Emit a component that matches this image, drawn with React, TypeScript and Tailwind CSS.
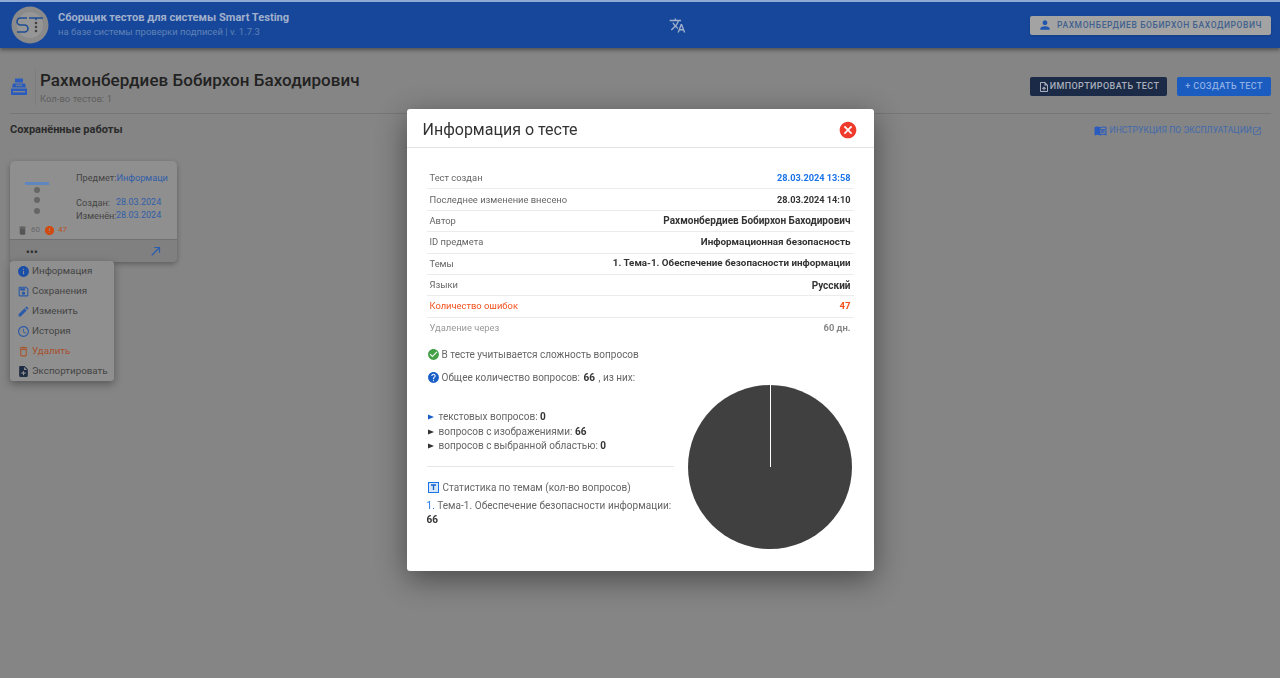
import { MdTranslate, MdPerson, MdInfo, MdOutlineSave, MdEdit, MdDeleteOutline, MdCheckCircle, MdHelp, MdCancel, MdCallMade, MdOpenInNew, MdOutlineMenuBook, MdUploadFile, MdNoteAdd, MdDelete, MdError, MdOutlineAccessTime } from "react-icons/md";

const rows = [
    { label: "Тест создан", value: "28.03.2024 13:58", labelCls: "text-[#666]", valueCls: "text-[9.2px] text-[#1a73e8] font-bold" },
    { label: "Последнее изменение внесено", value: "28.03.2024 14:10", labelCls: "text-[#666]", valueCls: "text-[9.2px] text-[#333] font-bold" },
    { label: "Автор", value: "Рахмонбердиев Бобирхон Баходирович", labelCls: "text-[#666]", valueCls: "text-[10px] text-[#333] font-bold" },
    { label: "ID предмета", value: "Информационная безопасность", labelCls: "text-[#666]", valueCls: "text-[9.9px] text-[#333] font-bold" },
    { label: "Темы", value: "1. Тема-1. Обеспечение безопасности информации", labelCls: "text-[#666]", valueCls: "text-[9.8px] text-[#333] font-bold" },
    { label: "Языки", value: "Русский", labelCls: "text-[#666]", valueCls: "text-[10px] text-[#333] font-bold" },
    { label: "Количество ошибок", value: "47", labelCls: "text-[#f4511e]", valueCls: "text-[9.6px] text-[#f4511e] font-bold" },
    { label: "Удаление через", value: "60 дн.", labelCls: "text-[#999]", valueCls: "text-[9.4px] text-[#888] font-bold" },
];

const menu = [
    { label: "Информация", Icon: MdInfo, iconCls: "text-[#1a4fa8]", textCls: "text-[#444]" },
    { label: "Сохранения", Icon: MdOutlineSave, iconCls: "text-[#2a5aa8]", textCls: "text-[#444]" },
    { label: "Изменить", Icon: MdEdit, iconCls: "text-[#2a5aa8]", textCls: "text-[#444]" },
    { label: "История", Icon: MdOutlineAccessTime, iconCls: "text-[#2a5aa8]", textCls: "text-[#444]" },
    { label: "Удалить", Icon: MdDeleteOutline, iconCls: "text-[#a8562e]", textCls: "text-[#a8502e]" },
    { label: "Экспортировать", Icon: MdNoteAdd, iconCls: "text-[#1e2c44]", textCls: "text-[#444]" },
];

function Logo() {
    return (
        <svg width="38" height="38" viewBox="0 0 38 38">
            <circle cx="19" cy="19" r="18.5" fill="#8a8a8a" />
            <circle cx="19" cy="19" r="13" fill="#969696" />
            <path d="M16 12H9.5a3 3 0 0 0 0 7h4a3 3 0 0 1 0 7H6" fill="none" stroke="#1f4e94" strokeWidth="1.6" />
            <path d="M18 12h14M25 12v2" fill="none" stroke="#1f4e94" strokeWidth="1.6" />
            <circle cx="25" cy="17" r="1.3" fill="#444" />
            <circle cx="25" cy="21" r="1.3" fill="#444" />
            <circle cx="25" cy="25" r="1.3" fill="#444" />
        </svg>
    );
}

function StackIcon() {
    return (
        <svg width="18" height="18" viewBox="0 0 18 18" fill="#2a5cc0">
            <path d="M5 0.5h8v4H5z" />
            <path d="M3 5.5h12l1 4H2z" />
            <rect x="6" y="6.7" width="6" height="1" fill="#858585" />
            <path d="M1 10.5h16v6.5H1z" />
            <rect x="3" y="13" width="12" height="1.4" fill="#858585" />
        </svg>
    );
}

function TopicIcon() {
    return (
        <svg width="11" height="11" viewBox="0 0 11 11" className="mr-[4px] ml-[1px]">
            <rect x="0.5" y="0.5" width="10" height="10" fill="#d8e8fb" stroke="#1a73e8" />
            <path d="M3 3h5M5.5 3v5" fill="none" stroke="#1a5fc8" strokeWidth="1.3" />
        </svg>
    );
}

function Bullet({ cls }: { cls: string }) {
    return (
        <svg width="6" height="6" viewBox="0 0 6 6" className={`inline-block mr-[5px] ml-[1px] ${cls}`} fill="currentColor">
            <path d="M0 0.5L6 3L0 5.5z" />
        </svg>
    );
}

export default function App() {
    return (
        <div className="relative min-h-[678px] bg-[#858585] font-['Roboto',sans-serif] overflow-hidden">
            {/* Header */}
            <div className="h-[48px] border-t-2 border-[#8fa9d4] bg-[#17479a] shadow-[0_2px_4px_rgba(0,0,0,0.4)] flex items-center pl-[11px] pr-[9px]">
                <Logo />
                <div className="ml-[9px] w-[611px]">
                    <p className="text-[11.1px] leading-[14px] font-bold text-[#a0b0cc]">Сборщик тестов для системы Smart Testing</p>
                    <p className="text-[9.5px] leading-[14px] text-[#5f82b8]">на базе системы проверки подписей | v. 1.7.3</p>
                </div>
                <MdTranslate className="text-[#a0b0cc] text-[17px]" />
                <div className="ml-auto h-[19px] w-[241px] rounded-[2px] bg-[#a3a3a3] shadow-sm flex items-center pl-[8px]">
                    <MdPerson className="text-[#1f56b0] text-[14px]" />
                    <span className="ml-[5px] text-[8.5px] font-medium tracking-[0.6px] text-[#41618f] whitespace-nowrap">РАХМОНБЕРДИЕВ БОБИРХОН БАХОДИРОВИЧ</span>
                </div>
            </div>

            {/* Page title */}
            <div className="pl-[10px] pr-[9px] pt-[20px]">
                <div className="flex items-center h-[37px]">
                    <StackIcon />
                    <div className="ml-[7px] border-l border-[#7c7c7c] pl-[4px] h-[36px]">
                        <h1 className="text-[17px] leading-[22px] font-medium tracking-[0.05px] text-[#222]">Рахмонбердиев Бобирхон Баходирович</h1>
                        <p className="text-[9.5px] leading-[12px] mt-[2px] text-[#5f5f5f]">Кол-во тестов: 1</p>
                    </div>
                    <div className="ml-auto flex items-center gap-[10px]">
                        <button className="h-[19px] w-[137px] rounded-[2px] bg-[#1a2a47] flex items-center justify-center text-[9px] font-medium tracking-[0.4px] text-[#a9afba] whitespace-nowrap">
                            <MdUploadFile className="text-[12px]" />
                            ИМПОРТИРОВАТЬ ТЕСТ
                        </button>
                        <button className="h-[19px] w-[94px] rounded-[2px] bg-[#1a5cc0] flex items-center justify-center text-[9px] font-medium tracking-[0.4px] text-[#8fb0e4] whitespace-nowrap">
                            + СОЗДАТЬ ТЕСТ
                        </button>
                    </div>
                </div>
                <div className="mt-[8px] border-t border-[#767676]" />
                <div className="flex items-center justify-between mt-[8px] h-[16px]">
                    <h2 className="text-[11px] leading-[14px] font-bold text-[#2a2a2a]">Сохранённые работы</h2>
                    <a className="flex items-center pr-[9px] text-[8.5px] tracking-[0.1px] text-[#3f69ad] mt-[1px]">
                        <MdOutlineMenuBook className="text-[13px] text-[#2a5cc0] mr-[3px]" />
                        ИНСТРУКЦИЯ ПО ЭКСПЛУАТАЦИИ
                        <MdOpenInNew className="text-[10px]" />
                    </a>
                </div>

                {/* Test card */}
                <div className="relative mt-[23px] w-[167px] h-[101px] rounded-[5px] bg-[#8f8f8f] shadow-[0_2px_5px_rgba(0,0,0,0.3)]">
                    <div className="h-[78px] relative">
                        <div className="absolute left-[15px] top-[21px] w-[24px] h-[3px] bg-[#5f86c0]" />
                        <div className="absolute left-[24px] top-[26px] w-[6px] h-[6px] rounded-full bg-[#666]" />
                        <div className="absolute left-[24px] top-[36px] w-[6px] h-[6px] rounded-full bg-[#666]" />
                        <div className="absolute left-[24px] top-[47px] w-[6px] h-[6px] rounded-full bg-[#666]" />
                        <div className="absolute left-[66px] top-[10px] text-[9.2px] leading-[13px] text-[#444] whitespace-nowrap">Предмет:<span className="text-[#2f5ea8]">Информаци</span></div>
                        <div className="absolute left-[66px] top-[35px] text-[9.2px] leading-[13px] text-[#444]">Создан:</div>
                        <div className="absolute left-[106px] top-[35px] text-[9px] leading-[13px] text-[#2f5ea8]">28.03.2024</div>
                        <div className="absolute left-[66px] top-[48px] text-[9.2px] leading-[13px] text-[#444]">Изменён:</div>
                        <div className="absolute left-[106px] top-[48px] text-[9px] leading-[13px] text-[#2f5ea8]">28.03.2024</div>
                        <div className="absolute left-[7px] top-[63px] flex items-center text-[8px] text-[#666]">
                            <MdDelete className="text-[11px] text-[#555]" />
                            <span className="ml-[3px]">60</span>
                            <MdError className="ml-[4px] text-[11px] text-[#d04a10]" />
                            <span className="ml-[3px] text-[#b9521c]">47</span>
                        </div>
                    </div>
                    <div className="h-[23px] rounded-b-[5px] border-t border-[#707070] bg-[#808080] flex items-center justify-between pl-[16px] pr-[14px]">
                        <span className="text-[10px] leading-none font-bold tracking-[0.4px] text-[#2a2a2a] pt-[3px]">•••</span>
                        <MdCallMade className="text-[#2a5cb0] text-[14px]" />
                    </div>

                    {/* Card menu */}
                    <div className="absolute left-0 top-[100px] w-[104px] h-[120px] rounded-[3px] bg-[#8f8f8f] shadow-[0_3px_8px_rgba(0,0,0,0.35)] z-10">
                        {menu.map(({ label, Icon, iconCls, textCls }) => (
                            <div key={label} className="h-[20px] flex items-center pl-[7px]">
                                <Icon className={`text-[13px] ${iconCls}`} />
                                <span className={`ml-[2px] text-[9.8px] ${textCls}`}>{label}</span>
                            </div>
                        ))}
                    </div>
                </div>
            </div>

            {/* Modal */}
            <div className="fixed inset-0 backdrop-blur-[0.7px] flex items-start justify-center pt-[109px] z-20">
                <div className="w-[467px] h-[462px] rounded-[3px] bg-white shadow-[0_8px_30px_rgba(0,0,0,0.45)]">
                    <div className="h-[39px] pt-[4px] border-b border-[#e3e3e3] flex items-center justify-between pl-[16px] pr-[16px]">
                        <h3 className="text-[16px] text-[#333]">Информация о тесте</h3>
                        <MdCancel className="text-[#ef3b2c] text-[20px]" />
                    </div>
                    <div className="px-[20px] pt-[20px]">
                        {rows.map((r, i) => (
                            <div key={r.label} className={`h-[21.4px] flex items-center justify-between px-[3px] ${i < rows.length - 1 ? "border-b border-[#ececec]" : ""}`}>
                                <span className={`text-[9.4px] ${r.labelCls}`}>{r.label}</span>
                                <span className={r.valueCls}>{r.value}</span>
                            </div>
                        ))}
                        <div className="flex">
                            <div className="w-[247px] shrink-0 text-[10px] text-[#666]">
                                <p className="flex items-center h-[16px] mt-[7px]"><MdCheckCircle className="text-[#43a047] text-[13px] mr-[2px]" />В тесте учитывается сложность вопросов</p>
                                <p className="flex items-center h-[16px] mt-[7px]"><MdHelp className="text-[#1a5fc8] text-[13px] mr-[2px]" />Общее количество вопросов:&nbsp;<b className="text-[#333] ml-[1px]">66</b>&nbsp;<span className="ml-[1px]">, из них:</span></p>
                                <div className="mt-[25px] leading-[14.5px]">
                                    <p><Bullet cls="text-[#1a5fc8]" />текстовых вопросов: <b className="text-[#333]">0</b></p>
                                    <p><Bullet cls="text-[#333]" />вопросов с изображениями: <b className="text-[#333]">66</b></p>
                                    <p><Bullet cls="text-[#333]" />вопросов с выбранной областью: <b className="text-[#333]">0</b></p>
                                </div>
                                <div className="mt-[12px] border-t border-[#e6e6e6]" />
                                <p className="flex items-center h-[16px] mt-[13px]"><TopicIcon />Статистика по темам (кол-во вопросов)</p>
                                <p className="mt-[1px] leading-[14.5px] pt-[2px] tracking-[0.05px]"><span className="text-[#1a73e8]">1.</span> Тема-1. Обеспечение безопасности информации:<br /><b className="text-[#333]">66</b></p>
                            </div>
                            <div className="ml-[14px] mt-[46px]">
                                <svg width="164" height="164" viewBox="0 0 164 164">
                                    <circle cx="82" cy="82" r="82" fill="#404040" />
                                    <line x1="82.5" y1="0" x2="82.5" y2="82" stroke="#fff" strokeWidth="1" />
                                </svg>
                            </div>
                        </div>
                    </div>
                </div>
            </div>
        </div>
    );
}
